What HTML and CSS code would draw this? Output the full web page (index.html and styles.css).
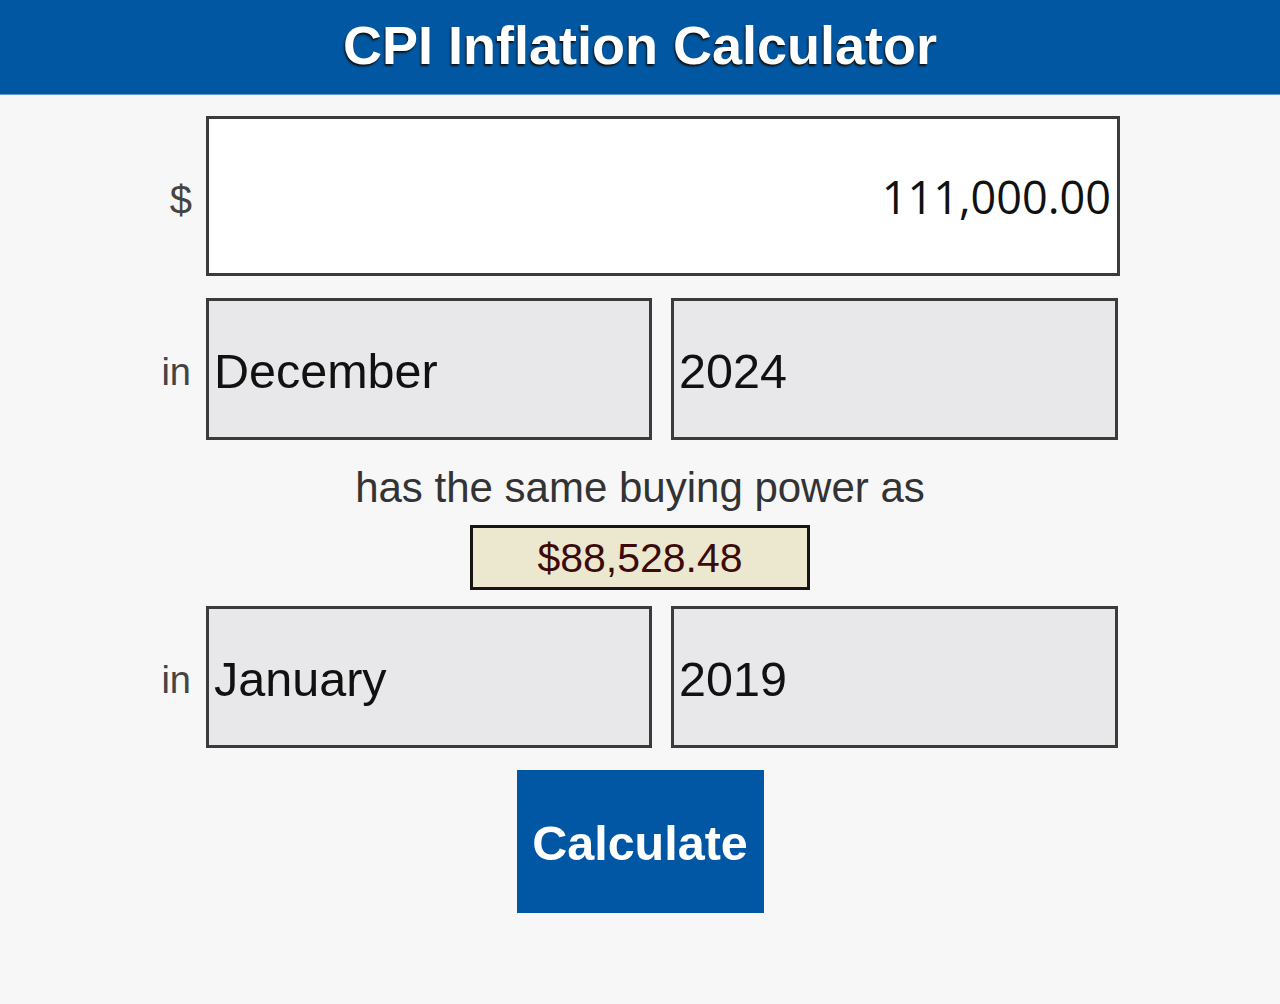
FILE: index.html
```html
<!DOCTYPE html>
<html lang="en">
<head>
<meta charset="utf-8">
<title>CPI Inflation Calculator</title>
<link rel="stylesheet" href="styles.css">
</head>
<body>
<header class="topbar">
  <h1 class="title">CPI Inflation Calculator</h1>
</header>
<main class="calc">
  <div class="row">
    <span class="lbl lbl-dollar">$</span>
    <input class="amount" type="text" value="111,000.00">
  </div>
  <div class="row row-date">
    <span class="lbl">in</span>
    <div class="pair">
      <select class="field"><option>December</option></select>
      <select class="field"><option>2024</option></select>
    </div>
  </div>
  <p class="equiv">has the same buying power as</p>
  <div class="result">$88,528.48</div>
  <div class="row row-date">
    <span class="lbl">in</span>
    <div class="pair">
      <select class="field"><option>January</option></select>
      <select class="field"><option>2019</option></select>
    </div>
  </div>
  <div class="actions">
    <button class="calc-btn" type="button">Calculate</button>
  </div>
</main>
</body>
</html>
```

FILE: styles.css
```css
html, body {
  margin: 0;
  padding: 0;
}
body {
  background: #f7f7f7;
  font-family: "Liberation Sans", Arial, sans-serif;
  color: #333;
}
.topbar {
  background: #0157a1;
  height: 94px;
  border-bottom: 1px solid #6a9ccb;
  display: flex;
  align-items: center;
  justify-content: center;
}
.title {
  margin: 0;
  color: #fff;
  font-family: "Liberation Sans", Arial, sans-serif;
  font-weight: bold;
  font-size: 54px;
  line-height: 1;
  text-shadow: -1px 2px 2px #111;
  position: relative;
  top: -2px;
}
.calc {
  width: 960px;
  margin: 0 auto;
  padding-top: 21px;
  display: flex;
  flex-direction: column;
}
.row {
  display: grid;
  grid-template-columns: 46px 914px;
  align-items: center;
}
.row-date {
  margin-top: 22px;
}
.lbl {
  text-align: right;
  padding-right: 14px;
  font-size: 38px;
  color: #444;
}
.lbl-dollar {
  font-size: 40px;
  padding-right: 14px;
  padding-top: 8px;
}
.row-date .lbl {
  padding-right: 15px;
  padding-top: 6px;
}
.amount {
  box-sizing: border-box;
  width: 914px;
  height: 160px;
  margin: 0;
  border: 3px solid #3b3b3b;
  background: #fff;
  text-align: right;
  padding: 0 6px 0 8px;
  font-family: "Open Sans", "Noto Sans", sans-serif;
  font-size: 45px;
  color: #111;
  outline: none;
}
.pair {
  display: grid;
  grid-template-columns: 446px 447px;
  column-gap: 19px;
}
.field {
  appearance: none;
  -webkit-appearance: none;
  box-sizing: border-box;
  height: 142px;
  margin: 0;
  border: 3px solid #3b3b3b;
  border-radius: 0;
  background: #e8e8ea;
  padding: 4px 6px 0 5px;
  font-family: "Liberation Sans", Arial, sans-serif;
  font-size: 48.5px;
  color: #111;
  outline: none;
}
.equiv {
  margin: 24px 0 0;
  text-align: center;
  font-size: 42px;
  line-height: 48px;
  color: #333;
}
.result {
  box-sizing: border-box;
  align-self: center;
  margin-top: 13px;
  width: 340px;
  height: 65px;
  border: 3px solid #151515;
  background: #ece8cf;
  color: #3c0a0a;
  font-size: 41px;
  line-height: 61px;
  text-align: center;
}
.result + .row-date {
  margin-top: 16px;
}
.actions {
  display: flex;
  justify-content: center;
  margin-top: 22px;
}
.calc-btn {
  width: 247px;
  height: 143px;
  margin: 0;
  border: 0;
  border-radius: 0;
  background: #0157a3;
  color: #fff;
  font-family: "Liberation Sans", Arial, sans-serif;
  font-weight: bold;
  font-size: 48.5px;
  padding: 2px 0 0;
  cursor: pointer;
}
```
